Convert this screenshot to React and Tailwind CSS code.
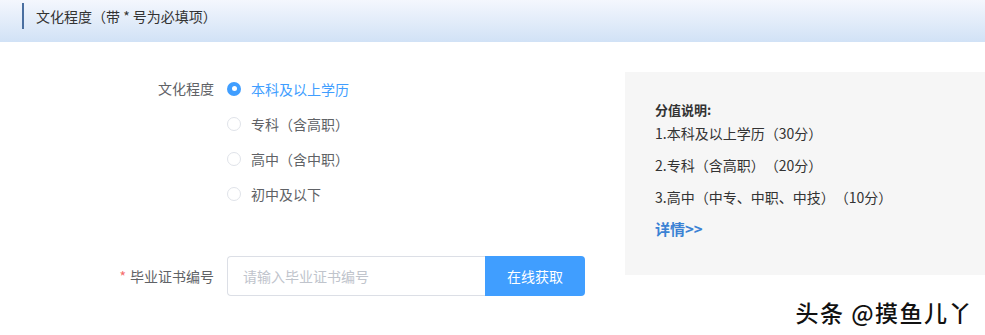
import React from "react";

const font = { fontFamily: '"Noto Sans CJK SC", "Noto Sans", sans-serif' };

function Radio({ checked, label }) {
  return (
    <div className="flex items-center h-[35px]">
      {checked ? (
        <span className="w-[14px] h-[14px] rounded-full bg-[#409eff] flex items-center justify-center">
          <span className="w-[5px] h-[5px] rounded-full bg-white" />
        </span>
      ) : (
        <span className="w-[14px] h-[14px] rounded-full border border-[#e0e3e9] bg-white" />
      )}
      <span
        className={
          "ml-[10px] text-[14px] leading-none " +
          (checked ? "text-[#409eff]" : "text-[#606266]")
        }
      >
        {label}
      </span>
    </div>
  );
}

export default function App() {
  return (
    <div
      className="relative w-[985px] h-[335px] bg-white overflow-hidden [text-spacing-trim:space-all]"
      style={font}
    >
      <div className="h-[42px] bg-gradient-to-b from-[#f4f7fd] to-[#d1e2f6] pl-[22px] pt-[3px] flex items-start">
        <div className="w-[2px] h-[26px] bg-[#4a6fa0]" />
        <div className="ml-[12px] h-[26px] flex items-center text-[14px] text-[#333]">
          文化程度（带 * 号为必填项）
        </div>
      </div>

      <div className="flex">
        <div className="w-[625px] pt-[29px]">
          <div className="flex">
            <div className="w-[214px] h-[35px] flex items-center justify-end text-[14px] text-[#606266]">
              文化程度
            </div>
            <div className="ml-[13px] flex flex-col">
              <Radio checked label="本科及以上学历" />
              <Radio label="专科（含高职）" />
              <Radio label="高中（含中职）" />
              <Radio label="初中及以下" />
            </div>
          </div>

          <div className="flex mt-[45px] items-center">
            <div className="w-[214px] flex items-center justify-end text-[14px] text-[#606266]">
              <span className="text-[#f56c6c] mr-[4px]">*</span>
              毕业证书编号
            </div>
            <div className="ml-[13px] flex h-[40px]">
              <div className="w-[258px] h-full border border-[#dcdfe6] rounded-l-[4px] border-r-0 flex items-center pl-[15px] text-[14px] text-[#c0c4cc]">
                请输入毕业证书编号
              </div>
              <button className="w-[100px] h-full bg-[#409eff] rounded-r-[4px] text-white text-[14px]">
                在线获取
              </button>
            </div>
          </div>
        </div>

        <div className="mt-[30px] w-[360px] h-[203px] bg-[#f6f6f6] pl-[30px] pt-[31px]">
          <div className="text-[13px] font-bold text-[#333] leading-[14px]">
            分值说明:
          </div>
          <div className="text-[14px] text-[#333] leading-[32px]">
            <div>1.本科及以上学历（30分）</div>
            <div>2.专科（含高职）（20分）</div>
            <div>3.高中（中专、中职、中技）（10分）</div>
            <div className="text-[15px] font-bold text-[#3b82d4]">详情&gt;&gt;</div>
          </div>
        </div>
      </div>

      <div
        className="absolute right-[12px] top-[297px] text-[23px] leading-[30px] tracking-[1.5px] font-medium text-[#111]"
        style={{
          textShadow:
            "1px 1px 0 #fff, -1px -1px 0 #fff, 1px -1px 0 #fff, -1px 1px 0 #fff",
        }}
      >
        头条 @摸鱼儿丫
      </div>
    </div>
  );
}
